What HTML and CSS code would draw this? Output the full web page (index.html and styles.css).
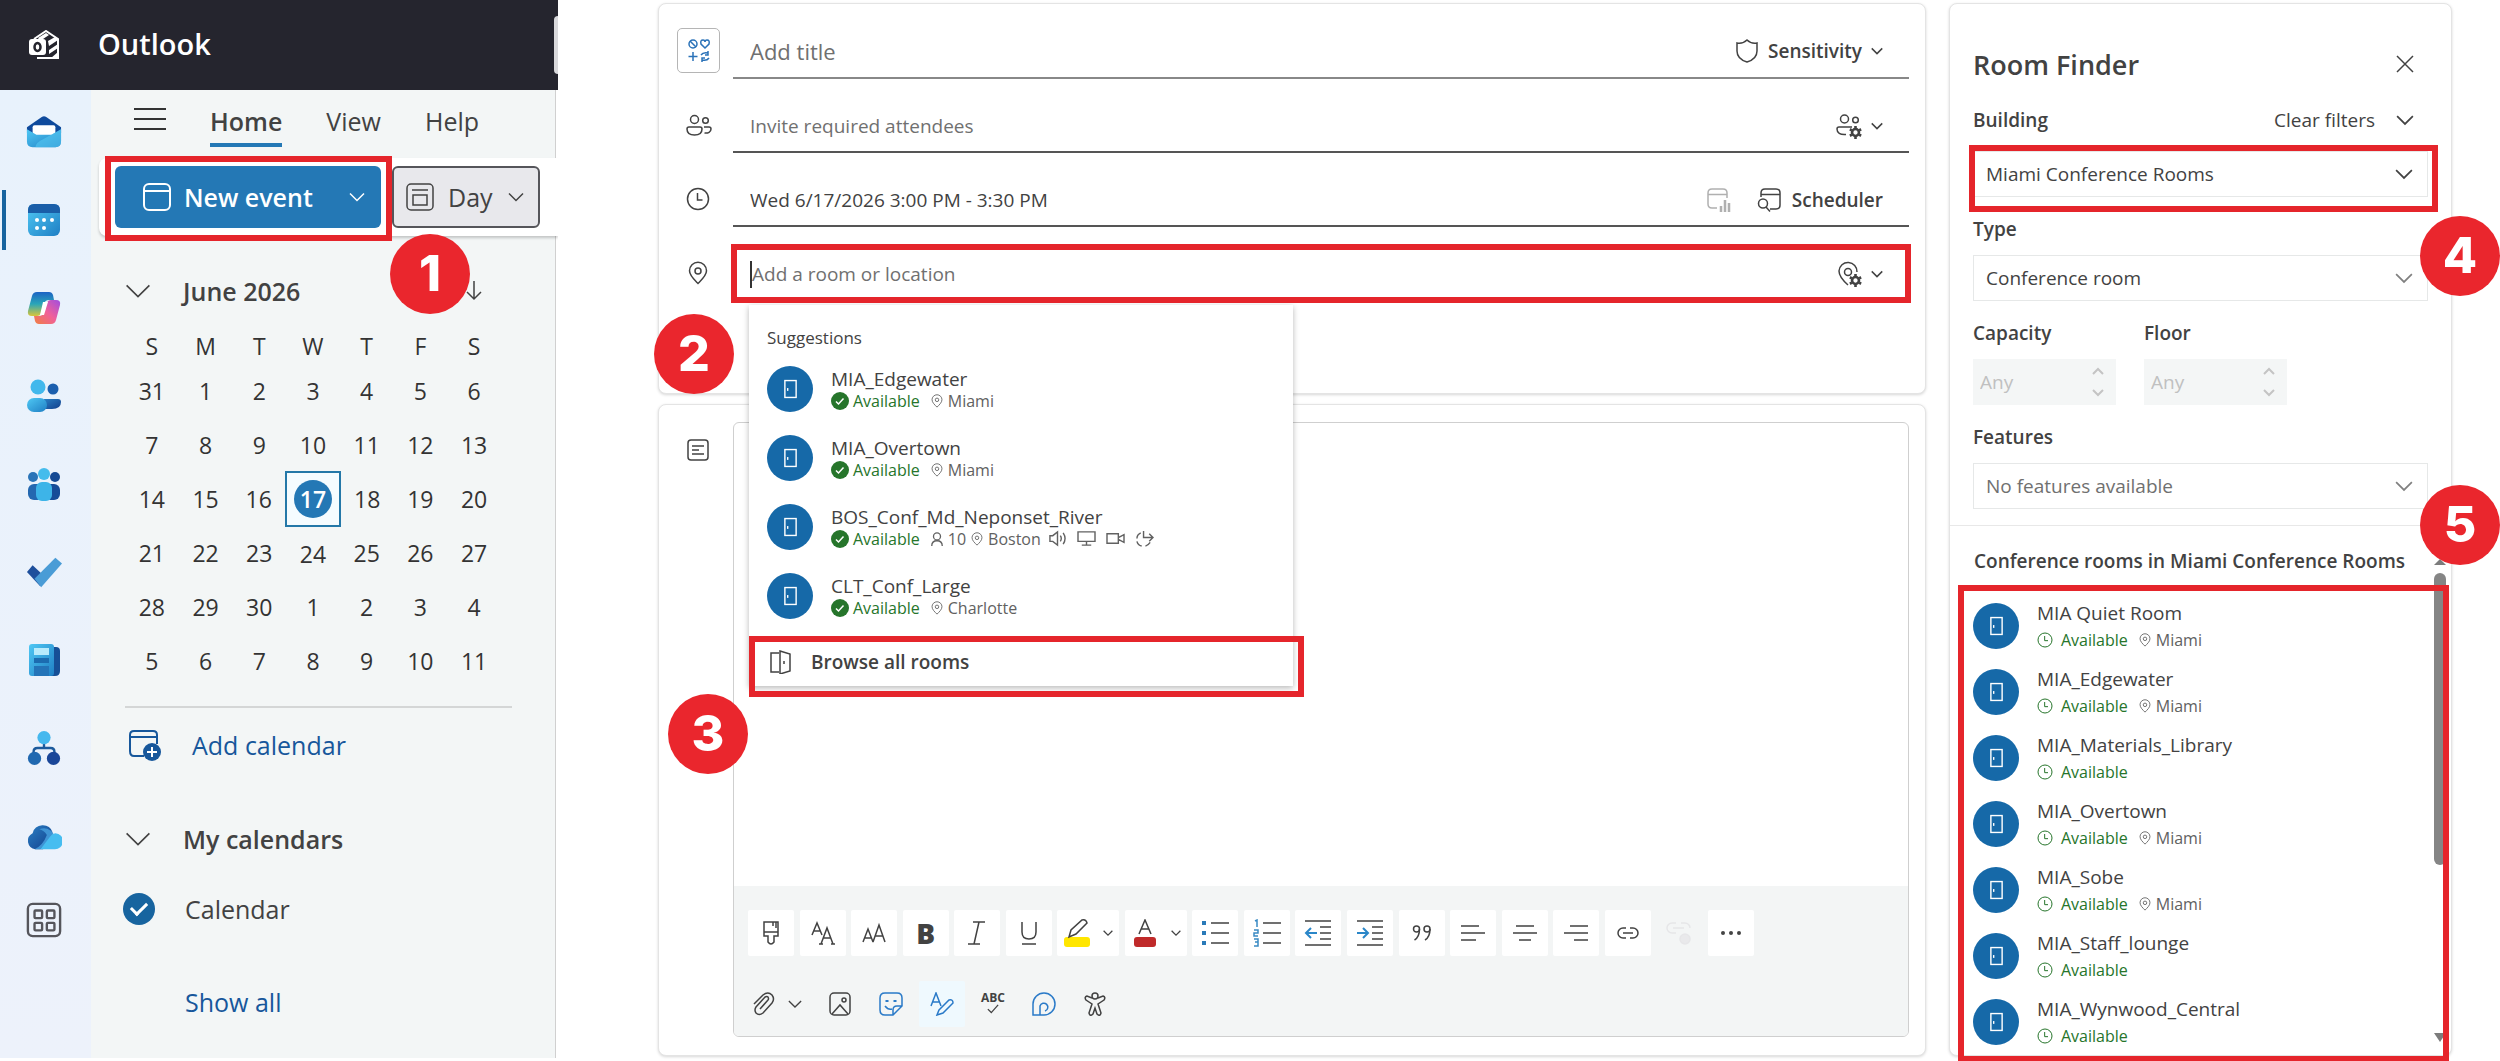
FILE: index.html
```html
<!DOCTYPE html>
<html lang="en">
<head>
    <meta charset="UTF-8">
    <meta name="viewport" content="width=device-width, initial-scale=1.0">
    <title>Outlook - Book a conference room</title>
    <link rel="stylesheet" href="styles.css">
</head>
<body>
    <!-- shared icons -->
    <svg class="sprite" aria-hidden="true">
        <defs>
            <linearGradient id="sky" x1="0" y1="0" x2="1" y2="1"><stop offset="0" stop-color="#4fc8f4"/><stop offset="1" stop-color="#1f7fc4"/></linearGradient>
            <linearGradient id="navy" x1="0" y1="0" x2="1" y2="1"><stop offset="0" stop-color="#2a7fc4"/><stop offset="1" stop-color="#123f8c"/></linearGradient>
            <linearGradient id="cool" x1="0" y1="0" x2="0" y2="1"><stop offset="0" stop-color="#1c63c4"/><stop offset=".5" stop-color="#2aa6b8"/><stop offset="1" stop-color="#d8c63a"/></linearGradient>
            <linearGradient id="warm" x1="1" y1="0" x2="0" y2="1"><stop offset="0" stop-color="#a04ee0"/><stop offset=".5" stop-color="#f0609a"/><stop offset="1" stop-color="#f08040"/></linearGradient>
        </defs>
        <symbol id="chevron" viewBox="0 0 16 16"><path d="M1 4.500l7 7 7-7"/></symbol>
        <symbol id="door" viewBox="0 0 16 22"><rect x="2" y="2" width="12" height="18"/><path d="M5 10v3"/></symbol>
        <symbol id="pin" viewBox="0 0 24 24"><path d="M12 22.500C8 18.500 3.500 14.500 3.500 9.800a8.500 8.500 0 0 1 17 0c0 4.700-4.500 8.700-8.500 12.700z"/><circle cx="12" cy="10" r="3"/></symbol>
        <symbol id="clock" viewBox="0 0 24 24"><circle cx="12" cy="12" r="10.500"/><path d="M11.500 6v7h5"/></symbol>
        <symbol id="people" viewBox="0 0 26 22"><circle cx="8.500" cy="5.500" r="4"/><circle cx="19.500" cy="6.500" r="2.800"/><path d="M3 13h11q2 0 2 2c0 4-3 6-7.500 6S1 19 1 15q0-2 2-2zM18 13h5q2 0 2 2c0 3-3 4.500-6.500 4"/></symbol>
        <symbol id="ok" viewBox="0 0 18 18"><circle cx="9" cy="9" r="9" fill="#26752b" stroke="none"/><path d="M5 9.500l2.500 2.500 5-5.500" stroke="#fff"/></symbol>
        <symbol id="gear" viewBox="0 0 12 12"><circle cx="6" cy="6" r="3.200" fill="none" stroke-width="2.400"/><path d="M6 0v2M6 10v2M.8 3l1.800 1M9.400 8l1.800 1M.8 9l1.800-1M9.400 4l1.800-1" stroke-width="2.400"/></symbol>
        <symbol id="cal" viewBox="0 0 28 28"><rect x="1" y="1" width="26" height="26" rx="5"/><path d="M1 8h26"/></symbol>
    </svg>

    <div class="page">
        <!-- Outlook navigation -->
        <aside class="outlook">
            <header class="topbar">
                <svg class="logo" viewBox="0 0 32 30">
                    <path d="M5 9L17 1l12 8v19H8" fill="none" stroke="#fff" stroke-width="2"/>
                    <path d="M9 8l8-5 3 2-9 6zM19 11l7-4 3 3-9 6zM20 20l9-6v4l-9 6zM22 28l7-6v6z" fill="#fff"/>
                    <rect y="9" width="17" height="16" rx="3" fill="#fff"/>
                    <ellipse cx="8.500" cy="17" rx="3" ry="4" fill="none" stroke="#25252e" stroke-width="2.500"/>
                </svg>
                <span class="brand">Outlook</span>
                <span class="search-edge"></span>
            </header>
            <div class="body">
                <nav class="rail">
                    <a href="#" title="Mail"><svg viewBox="0 0 38 36"><path d="M1 13L17 2q2-1 4 0l16 11v6H1z" fill="#0f4a9c"/><rect x="7" y="11" width="24" height="14" rx="2" fill="#fff"/><path d="M1 15l10 6h16l10-6v13q0 6-6 6H7q-6 0-6-6z" fill="url(#sky)"/><path d="M19 25l18-10v13q0 6-6 6H10q0-5 9-9z" fill="#55c8f2" opacity=".6"/></svg></a>
                    <a href="#" title="Calendar" class="selected"><svg viewBox="0 0 36 36"><rect x="2" y="2" width="32" height="32" rx="6" fill="url(#sky)"/><path d="M8 2h20q6 0 6 6v3H2V8q0-6 6-6z" fill="#1a5ea8"/><g fill="#fff"><circle cx="11" cy="18" r="2"/><circle cx="18" cy="18" r="2"/><circle cx="26" cy="18" r="2"/><circle cx="11" cy="26" r="2"/><circle cx="18" cy="26" r="2"/></g></svg></a>
                    <a href="#" title="Copilot"><svg viewBox="0 0 36 36"><path d="M11 2h12q3 0 4 3l1 5h-5q-4 0-5 4l-3 9q-1 3-4 3H6q-5 0-4-5L6 6q1-4 5-4z" fill="url(#cool)"/><path d="M25 34H13q-3 0-4-3l-1-5h5q4 0 5-4l3-9q1-3 4-3h5q5 0 4 5l-4 15q-1 4-5 4z" fill="url(#warm)"/><path d="M17 12h5l-4 13h-4z" fill="#fff"/></svg></a>
                    <a href="#" title="People"><svg viewBox="0 0 36 36"><circle cx="27" cy="11" r="5.500" fill="#1b5fae"/><path d="M18 21h14q3 0 3 3 0 7-9 7h-8z" fill="url(#navy)"/><circle cx="12" cy="9" r="7.500" fill="#42b8ec"/><rect x="1" y="20" width="20" height="14" rx="7" fill="url(#sky)"/></svg></a>
                    <a href="#" title="Groups"><svg viewBox="0 0 36 36"><circle cx="7" cy="11" r="5" fill="#2a74b8"/><circle cx="29" cy="11" r="5" fill="#154a94"/><rect x="2" y="18" width="16" height="16" rx="6" fill="#2468b0"/><rect x="18" y="18" width="16" height="16" rx="6" fill="#164c98"/><circle cx="18" cy="8" r="6" fill="#45bcec"/><rect x="10" y="16" width="16" height="19" rx="6" fill="#3db4e8"/></svg></a>
                    <a href="#" title="To Do"><svg viewBox="0 0 38 36"><path d="M1 18l6-7 14 13-6 9z" fill="#1e4f9c"/><path d="M9 25L31 3l7 6-22 25z" fill="#4a9cd6"/></svg></a>
                    <a href="#" title="News"><svg viewBox="0 0 36 36"><path d="M24 5h6q4 0 4 4v20q0 5-5 5h-5z" fill="#164f96"/><rect x="3" y="2" width="25" height="32" rx="3" fill="url(#sky)"/><rect x="8" y="6" width="15" height="7" fill="#b8ebfc"/><rect x="8" y="16" width="15" height="5" fill="#1c6cb0"/><rect x="8" y="24" width="15" height="10" fill="#2474b8"/></svg></a>
                    <a href="#" title="Org Explorer"><svg viewBox="0 0 36 38"><path d="M18 10v9M7 28v-5q0-4 4-4h14q4 0 4 4v5" fill="none" stroke="#1c5a9c" stroke-width="2.500"/><circle cx="18" cy="8" r="7" fill="#45b8ee"/><circle cx="8" cy="30" r="7" fill="#2068b0"/><circle cx="28" cy="30" r="7" fill="#1a4698"/></svg></a>
                    <a href="#" title="OneDrive"><svg viewBox="0 0 38 36"><path d="M10 32a9 9 0 0 1-3-17 11 11 0 0 1 21-1L18 32z" fill="url(#navy)"/><path d="M14 11a11 11 0 0 1 15 5L15 32H9q9-4 13-15-3-5-8-6z" fill="#3f93d4"/><path d="M15 32l11-14q2-3 5-3a8 8 0 0 1-1 17z" fill="#46bdf0"/></svg></a>
                    <a href="#" title="Apps"><svg viewBox="0 0 38 38"><g fill="none" stroke="#55555b" stroke-width="2.500"><rect x="2" y="2" width="34" height="34" rx="5"/><rect x="9" y="9" width="8" height="8" rx="1"/><rect x="22" y="9" width="8" height="8" rx="1"/><rect x="9" y="22" width="8" height="8" rx="1"/><rect x="22" y="22" width="8" height="8" rx="1"/></g></svg></a>
                </nav>

                <div class="pane">
                    <div class="tabs">
                        <button class="menu" aria-label="Menu"><svg viewBox="0 0 32 24"><path d="M0 2h32M0 12h32M0 22h32"/></svg></button>
                        <button class="tab active">Home</button>
                        <button class="tab">View</button>
                        <button class="tab">Help</button>
                    </div>
                    <div class="ribbon">
                        <div class="new-wrap">
                            <button class="new-event">
                                <svg class="i28"><use href="#cal"/></svg>
                                <span>New event</span>
                                <svg class="chev"><use href="#chevron"/></svg>
                            </button>
                            <div class="mark mark-new"></div>
                            <div class="badge badge-1">1</div>
                        </div>
                        <button class="day">
                            <svg class="i28" viewBox="0 0 28 28"><rect x="1" y="1" width="26" height="26" rx="4"/><path d="M6 7h16M7 12h14v10H7z"/></svg>
                            <span>Day</span>
                            <svg class="chev"><use href="#chevron"/></svg>
                        </button>
                    </div>

                    <div class="month">
                        <svg class="chev-lg"><use href="#chevron"/></svg>
                        <h2>June 2026</h2>
                        <svg class="down" viewBox="0 0 18 20"><path d="M9 0v18M2 11l7 7 7-7"/></svg>
                    </div>
                    <table class="calendar">
                        <thead>
                            <tr><th>S</th><th>M</th><th>T</th><th>W</th><th>T</th><th>F</th><th>S</th></tr>
                        </thead>
                        <tbody>
                            <tr><td>31</td><td>1</td><td>2</td><td>3</td><td>4</td><td>5</td><td>6</td></tr>
                            <tr><td>7</td><td>8</td><td>9</td><td>10</td><td>11</td><td>12</td><td>13</td></tr>
                            <tr><td>14</td><td>15</td><td>16</td><td class="today"><span>17</span></td><td>18</td><td>19</td><td>20</td></tr>
                            <tr><td>21</td><td>22</td><td>23</td><td>24</td><td>25</td><td>26</td><td>27</td></tr>
                            <tr><td>28</td><td>29</td><td>30</td><td>1</td><td>2</td><td>3</td><td>4</td></tr>
                            <tr><td>5</td><td>6</td><td>7</td><td>8</td><td>9</td><td>10</td><td>11</td></tr>
                        </tbody>
                    </table>

                    <div class="links">
                        <a href="#" class="add-calendar">
                            <svg viewBox="0 0 34 32"><path d="M29 15V6q0-4-4-4H6Q2 2 2 6v16q0 5 4 5h10M2 8h27"/><circle cx="24" cy="23" r="9" fill="#17579b" stroke="none"/><path d="M24 18v10M19 23h10" stroke="#fff"/></svg>
                            Add calendar
                        </a>
                        <div class="group">
                            <svg class="chev-lg"><use href="#chevron"/></svg>
                            <h2>My calendars</h2>
                        </div>
                        <label class="check"><input type="checkbox" checked> Calendar</label>
                        <a href="#" class="show-all">Show all</a>
                    </div>
                </div>
            </div>
        </aside>

        <!-- Event form -->
        <main class="form">
            <section class="card details">
                <div class="row">
                    <button class="emoji" aria-label="Pick an icon">
                        <svg viewBox="0 0 24 24"><circle cx="6" cy="6" r="4"/><path d="M3 3l6 6M18 10l-4-4q-1-4 2-4 2 0 2 2 0-2 2-2 3 0 2 4zM6 14v9M1.500 18.500h9M14 17q2-3 7-2v-2M21 15v2h-3M22 20q-2 3-7 2v2M15 22v-2h3"/></svg>
                    </button>
                    <div class="field light">
                        <input class="title" type="text" placeholder="Add title" aria-label="Add title">
                        <button class="tool">
                            <svg class="i24" viewBox="0 0 24 24"><path d="M12 1q4 4 10 3v8q0 8-10 11Q2 20 2 12V4q6 1 10-3z"/></svg>
                            <b>Sensitivity</b>
                            <svg class="chev-sm"><use href="#chevron"/></svg>
                        </button>
                    </div>
                </div>
                <div class="row">
                    <svg class="i26"><use href="#people"/></svg>
                    <div class="field">
                        <input type="text" placeholder="Invite required attendees" aria-label="Invite required attendees">
                        <button class="tool" aria-label="Attendee options">
                            <svg class="i26" viewBox="0 0 26 26"><circle cx="8.500" cy="6" r="4"/><circle cx="19.500" cy="7" r="2.800"/><path d="M16 14H3q-2 0-2 2c0 4 3 6 9 5.500"/><use href="#gear" x="13" y="13" width="13" height="13"/></svg>
                            <svg class="chev-sm"><use href="#chevron"/></svg>
                        </button>
                    </div>
                </div>
                <div class="row">
                    <svg class="i24"><use href="#clock"/></svg>
                    <div class="field">
                        <input type="text" value="Wed 6/17/2026 3:00 PM - 3:30 PM" aria-label="Date and time">
                        <button class="tool faded" aria-label="Polls" disabled>
                            <svg class="i24" viewBox="0 0 24 24"><path d="M20 10V5q0-4-4-4H5Q1 1 1 5v11q0 4 4 4h5M1 6.500h19"/><path d="M14 24v-6M18 24V12M22 24v-9" stroke-width="2.500"/></svg>
                        </button>
                        <button class="tool wide">
                            <svg class="i24" viewBox="0 0 24 24"><path d="M4 9V5q0-4 4-4h11q4 0 4 4v12q0 4-4 4h-6M4 6.500h19"/><circle cx="6" cy="15.500" r="4.500"/><path d="M9 19l4 4.500"/></svg>
                            <b>Scheduler</b>
                        </button>
                    </div>
                </div>
                <div class="row">
                    <svg class="i24"><use href="#pin"/></svg>
                    <div class="field location">
                        <input type="text" placeholder="Add a room or location" aria-label="Add a room or location">
                        <button class="tool" aria-label="Location options">
                            <svg class="i26" viewBox="0 0 26 26"><path d="M12 24Q3 16 3 10a9 9 0 0 1 18 1"/><circle cx="12" cy="11" r="3.500"/><use href="#gear" x="13" y="13" width="13" height="13"/></svg>
                            <svg class="chev-sm"><use href="#chevron"/></svg>
                        </button>
                        <div class="dropdown">
                            <h3>Suggestions</h3>
                            <div class="room">
                                <span class="avatar"><svg><use href="#door"/></svg></span>
                                <div><p>MIA_Edgewater</p><small><svg class="i18"><use href="#ok"/></svg><em>Available</em><svg class="i14"><use href="#pin"/></svg>Miami</small></div>
                            </div>
                            <div class="room">
                                <span class="avatar"><svg><use href="#door"/></svg></span>
                                <div><p>MIA_Overtown</p><small><svg class="i18"><use href="#ok"/></svg><em>Available</em><svg class="i14"><use href="#pin"/></svg>Miami</small></div>
                            </div>
                            <div class="room">
                                <span class="avatar"><svg><use href="#door"/></svg></span>
                                <div><p>BOS_Conf_Md_Neponset_River</p>
                                    <small><svg class="i18"><use href="#ok"/></svg><em>Available</em>
                                        <svg class="i14" viewBox="0 0 14 16"><circle cx="7" cy="5" r="4"/><path d="M1 16q0-6 6-6t6 6"/></svg>10
                                        <svg class="i14"><use href="#pin"/></svg>Boston
                                        <svg class="feature" viewBox="0 0 20 18"><path d="M2 6h3l5-4v14l-5-4H2zM13 6q2 3 0 6M16 3q4 6 0 12"/></svg>
                                        <svg class="feature" viewBox="0 0 20 18"><path d="M1 2h18v10H1zM10 12v4M5 16h10"/></svg>
                                        <svg class="feature" viewBox="0 0 20 18"><path d="M1 4h12v10H1zM13 8l6-3v8l-6-3"/></svg>
                                        <svg class="feature" viewBox="0 0 20 18"><path d="M9 1v7h10M15 4l4 4-4 4M16 13q-2 3-5 4M7 17q-4-1-5-5M2 9q0-4 4-6"/></svg>
                                    </small>
                                </div>
                            </div>
                            <div class="room">
                                <span class="avatar"><svg><use href="#door"/></svg></span>
                                <div><p>CLT_Conf_Large</p><small><svg class="i18"><use href="#ok"/></svg><em>Available</em><svg class="i14"><use href="#pin"/></svg>Charlotte</small></div>
                            </div>
                            <div class="browse-wrap">
                                <button class="browse">
                                    <svg class="i24" viewBox="0 0 24 24"><path d="M10 3H2v19h8M11 1l10 3v17l-10 3zM15 11v3"/></svg>
                                    Browse all rooms
                                </button>
                                <div class="mark mark-browse"></div>
                                <div class="badge badge-3">3</div>
                            </div>
                        </div>
                        <div class="mark mark-location"></div>
                        <div class="badge badge-2">2</div>
                    </div>
                </div>
            </section>

            <section class="card message">
                <svg class="note" viewBox="0 0 22 24"><rect x="1" y="2" width="20" height="20" rx="3"/><path d="M5 8h12M5 12h7M5 16h12"/></svg>
                <div class="editor">
                    <div class="text" contenteditable="true"></div>
                    <div class="toolbar">
                        <div class="tools format">
                            <button aria-label="Format painter"><svg viewBox="0 0 24 24"><path d="M5 1h14v14h-4v6q-3 4-6 0v-6H5zM5 11h14M14 1v4M17 1v6"/></svg></button>
                            <button aria-label="Font"><svg viewBox="0 0 24 24"><path d="M1 14L6 2l5 12M3 10h6M10 23l6-16 6 16M12 17h8M20 23h4M8 23h4"/></svg></button>
                            <button aria-label="Font size"><svg viewBox="0 0 24 24"><path d="M1 21l5-13 5 13M3 17h6M11 21l6-17 6 17M13 15h8"/></svg></button>
                            <button aria-label="Bold" class="bold">B</button>
                            <button aria-label="Italic"><svg viewBox="0 0 24 24"><path d="M8 1h12M3 23h12M14 1L9 23"/></svg></button>
                            <button aria-label="Underline"><svg viewBox="0 0 24 24"><path d="M5 1v10q0 7 7 7t7-7V1M5 23h14"/></svg></button>
                            <button aria-label="Highlight" class="split"><svg class="i28" viewBox="0 0 28 28"><rect x="1" y="18" width="26" height="10" rx="3" fill="#ffe600" stroke="none"/><path d="M6 18l2-7L19 1q4-1 5 3L13 15z" fill="#fff"/></svg><svg class="chev-sm"><use href="#chevron"/></svg></button>
                            <button aria-label="Font color" class="split"><svg class="i28" viewBox="0 0 28 28"><rect x="3" y="18" width="22" height="10" rx="3" fill="#c02a2a" stroke="none"/><path d="M8 15L14 1l6 14M10 10h8"/></svg><svg class="chev-sm"><use href="#chevron"/></svg></button>
                            <button aria-label="Bullets"><svg class="i28" viewBox="0 0 28 28"><path d="M10 4h18M10 14h18M10 24h18"/><path d="M1 4h4M1 14h4M1 24h4" stroke="#2a7ab8" stroke-width="4"/></svg></button>
                            <button aria-label="Numbering"><svg class="i28" viewBox="0 0 28 28"><path d="M10 4h18M10 14h18M10 24h18"/><path d="M2 2l2-1v7M1 11h4v3H1v3h4M1 20h4v7H1M2 23h3" stroke="#3a8ac4"/></svg></button>
                            <button aria-label="Decrease indent"><svg class="i28" viewBox="0 0 28 28"><path d="M1 2h26M16 8h11M16 14h11M16 20h11M1 26h26"/><path d="M13 14H2M7 9l-5 5 5 5" stroke="#2a86c8" stroke-width="2"/></svg></button>
                            <button aria-label="Increase indent"><svg class="i28" viewBox="0 0 28 28"><path d="M1 2h26M16 8h11M16 14h11M16 20h11M1 26h26"/><path d="M1 14h11M7 9l5 5-5 5" stroke="#2a86c8" stroke-width="2"/></svg></button>
                            <button aria-label="Quote"><svg viewBox="0 0 24 24"><circle cx="6.500" cy="8" r="3"/><circle cx="17" cy="8" r="3"/><path d="M9.500 8q0 8-5 11M20 8q0 8-5 11"/></svg></button>
                            <button aria-label="Align left"><svg viewBox="0 0 24 24"><path d="M0 5h18M0 12h24M0 19h15"/></svg></button>
                            <button aria-label="Align center"><svg viewBox="0 0 24 24"><path d="M3 5h18M0 12h24M6 19h12"/></svg></button>
                            <button aria-label="Align right"><svg viewBox="0 0 24 24"><path d="M6 5h18M0 12h24M10 19h14"/></svg></button>
                            <button aria-label="Insert link"><svg viewBox="0 0 24 24"><path d="M10 7H7a5 5 0 0 0 0 10h3M14 7h3a5 5 0 0 1 0 10h-3M7 12h10"/></svg></button>
                            <button aria-label="Remove link" class="off" disabled><svg class="i28" viewBox="0 0 28 28"><path d="M11 4H7a5 5 0 0 0 0 10h4M16 4h4a5 5 0 0 1 5 5M8 9h11"/><circle cx="20" cy="20" r="5" fill="#e9e9eb"/></svg></button>
                            <button aria-label="More"><svg viewBox="0 0 24 24"><g fill="#444" stroke="none"><circle cx="4" cy="12" r="2"/><circle cx="12" cy="12" r="2"/><circle cx="20" cy="12" r="2"/></g></svg></button>
                        </div>
                        <div class="tools insert">
                            <button aria-label="Attach" class="split"><svg viewBox="0 0 24 24"><path d="M2 12l9-9q5-4 9 0 3 4 0 8l-9 10q-4 3-7 0-2-3 0-6l9-10q2-1 3 0 1 2 0 3l-8 9"/></svg><svg class="chev"><use href="#chevron"/></svg></button>
                            <button aria-label="Picture"><svg viewBox="0 0 24 24"><rect x="2" y="1" width="20" height="22" rx="4"/><circle cx="16" cy="8" r="2"/><path d="M4 22l8-9 8 9"/></svg></button>
                            <button aria-label="Sticker" class="blue"><svg viewBox="0 0 24 24"><path d="M14 23H6q-5 0-5-5V6q0-5 5-5h12q5 0 5 5v8zM14 23v-5q0-4 4-4h5M6 14q3 4 7 3"/><path d="M8 8v2M16 8v2" stroke-width="3"/></svg></button>
                            <button aria-label="Signature" class="blue on"><svg viewBox="0 0 24 24"><path d="M1 14L6 1l5 13M3 10h6M9 18L19 8q4-1 4 3L13 21l-6 2z"/></svg></button>
                            <button aria-label="Spelling" class="spell">ABC<svg class="i14" viewBox="0 0 14 14"><path d="M1 6l4 4 8-9"/></svg></button>
                            <button aria-label="Loop" class="blue"><svg viewBox="0 0 24 24"><path d="M1 23V12A11 11 0 1 1 12 23zM8 23v-9a4 4 0 1 1 5 5"/></svg></button>
                            <button aria-label="Accessibility"><svg viewBox="0 0 24 24"><circle cx="12" cy="4" r="3"/><path d="M9 6L4 4Q1 5 3 8l6 4-3 9q1 4 4 1l2-6 2 6q3 3 4-1l-3-9 6-4q2-3-1-4l-5 2"/></svg></button>
                        </div>
                    </div>
                </div>
            </section>
        </main>

        <!-- Room Finder -->
        <aside class="card finder">
            <div class="finder-head">
                <h1>Room Finder</h1>
                <button aria-label="Close"><svg class="i18" viewBox="0 0 18 18"><path d="M1 1l16 16M17 1L1 17"/></svg></button>
            </div>
            <div class="building-head">
                <label for="building">Building</label>
                <button>Clear filters <svg class="i18"><use href="#chevron"/></svg></button>
            </div>
            <div class="select building">
                <select id="building"><option>Miami Conference Rooms</option></select>
                <svg class="i18"><use href="#chevron"/></svg>
                <div class="mark mark-building"></div>
                <div class="badge badge-4">4</div>
            </div>
            <label class="name" for="type">Type</label>
            <div class="select">
                <select id="type"><option>Conference room</option></select>
                <svg class="i18"><use href="#chevron"/></svg>
            </div>
            <div class="numbers">
                <div>
                    <label class="name" for="capacity">Capacity</label>
                    <div class="spin"><input id="capacity" type="text" placeholder="Any" disabled><svg viewBox="0 0 12 30"><path d="M1 7l5-5 5 5M1 23l5 5 5-5"/></svg></div>
                </div>
                <div>
                    <label class="name" for="floor">Floor</label>
                    <div class="spin"><input id="floor" type="text" placeholder="Any" disabled><svg viewBox="0 0 12 30"><path d="M1 7l5-5 5 5M1 23l5 5 5-5"/></svg></div>
                </div>
            </div>
            <label class="name" for="features">Features</label>
            <div class="select none">
                <select id="features"><option>No features available</option></select>
                <svg class="i18"><use href="#chevron"/></svg>
            </div>
            <h2>Conference rooms in Miami Conference Rooms</h2>
            <div class="rooms">
                <div class="room">
                    <span class="avatar"><svg><use href="#door"/></svg></span>
                    <div><p>MIA Quiet Room</p><small><svg class="i16"><use href="#clock"/></svg><em>Available</em><svg class="i14"><use href="#pin"/></svg>Miami</small></div>
                </div>
                <div class="room">
                    <span class="avatar"><svg><use href="#door"/></svg></span>
                    <div><p>MIA_Edgewater</p><small><svg class="i16"><use href="#clock"/></svg><em>Available</em><svg class="i14"><use href="#pin"/></svg>Miami</small></div>
                </div>
                <div class="room">
                    <span class="avatar"><svg><use href="#door"/></svg></span>
                    <div><p>MIA_Materials_Library</p><small><svg class="i16"><use href="#clock"/></svg><em>Available</em></small></div>
                </div>
                <div class="room">
                    <span class="avatar"><svg><use href="#door"/></svg></span>
                    <div><p>MIA_Overtown</p><small><svg class="i16"><use href="#clock"/></svg><em>Available</em><svg class="i14"><use href="#pin"/></svg>Miami</small></div>
                </div>
                <div class="room">
                    <span class="avatar"><svg><use href="#door"/></svg></span>
                    <div><p>MIA_Sobe</p><small><svg class="i16"><use href="#clock"/></svg><em>Available</em><svg class="i14"><use href="#pin"/></svg>Miami</small></div>
                </div>
                <div class="room">
                    <span class="avatar"><svg><use href="#door"/></svg></span>
                    <div><p>MIA_Staff_lounge</p><small><svg class="i16"><use href="#clock"/></svg><em>Available</em></small></div>
                </div>
                <div class="room">
                    <span class="avatar"><svg><use href="#door"/></svg></span>
                    <div><p>MIA_Wynwood_Central</p><small><svg class="i16"><use href="#clock"/></svg><em>Available</em></small></div>
                </div>
                <div class="scrollbar"><i class="up"></i><i class="thumb"></i><i class="dn"></i></div>
                <div class="mark mark-rooms"></div>
                <div class="badge badge-5">5</div>
            </div>
        </aside>
    </div>
</body>
</html>
```
FILE: styles.css
```css
* {
    box-sizing: border-box;
}

body {
    margin: 0;
    background: #fff;
    color: #424242;
    font-family: "Open Sans", "Noto Sans", sans-serif;
    font-size: 19px;
}

h1, h2, h3, p {
    margin: 0;
}

button, input, select {
    font: inherit;
    color: inherit;
    background: none;
    border: none;
    padding: 0;
    margin: 0;
    outline: none;
}

button {
    cursor: pointer;
}

a {
    color: #17579b;
    text-decoration: none;
}

svg {
    display: block;
    flex: none;
    fill: none;
    stroke: currentColor;
    stroke-width: 1.5;
}

.sprite {
    position: absolute;
    width: 0;
    height: 0;
}

.i14 { width: 14px; height: 14px; }
.i16 { width: 16px; height: 16px; }
.i18 { width: 18px; height: 18px; }
.i24 { width: 24px; height: 24px; }
.i26 { width: 26px; height: 26px; }
.i28 { width: 28px; height: 28px; }
.chev-sm { width: 12px; height: 12px; stroke-width: 2; }
.chev { width: 16px; height: 16px; }
.chev-lg { width: 26px; height: 26px; stroke-width: 1; }

.page {
    display: flex;
    min-height: 100vh;
    padding-right: 48px;
}

/* red annotations */
.mark {
    position: absolute;
    border: 6px solid #e5252b;
    pointer-events: none;
}

.badge {
    position: absolute;
    width: 80px;
    height: 80px;
    border-radius: 50%;
    background: #ea262d;
    color: #fff;
    font: 800 50px/78px Inter, sans-serif;
    text-align: center;
    z-index: 5;
}

.mark-new { inset: -10px -11px -13px -10px; }
.badge-1 { left: 275px; top: 68px; }
.mark-location { inset: 17px -2px -4px -2px; }
.badge-2 { left: -79px; top: 87px; }
.mark-browse { inset: 0 -11px -11px 0; }
.badge-3 { left: -81px; top: 58px; }
.mark-building { inset: -6px -10px -15px -4px; }
.badge-4 { right: -72px; top: 65px; }
.mark-rooms { inset: -8px -21px -7px -15px; }
.badge-5 { right: -72px; top: -108px; }

/* left side */
.outlook {
    width: 558px;
    flex: none;
    display: flex;
    flex-direction: column;
    margin-bottom: 3px;
    overflow: hidden;
}

.topbar {
    height: 90px;
    background: #25252e;
    display: flex;
    align-items: center;
    padding-left: 29px;
    overflow: hidden;
}

.logo {
    width: 32px;
    height: 30px;
    stroke: none;
}

.brand {
    color: #fff;
    font-size: 29px;
    font-weight: 600;
    line-height: 88px;
    margin: 0 0 2px 37px;
}

.search-edge {
    width: 4px;
    height: 58px;
    margin-left: auto;
    background: #d9d9dc;
    border-radius: 6px 0 0 6px;
}

.body {
    flex: 1;
    display: flex;
}

.rail {
    width: 91px;
    flex: none;
    padding-top: 20px;
    background: linear-gradient(#e8f2fc, #edf2fb);
    display: flex;
    flex-direction: column;
    align-items: center;
    gap: 44px;
}

.rail a {
    width: 100%;
    height: 44px;
    padding-right: 3px;
    position: relative;
    display: flex;
    align-items: center;
    justify-content: center;
}

.rail a:last-child {
    margin-top: -4px;
}

.rail svg {
    width: 36px;
    height: 36px;
    stroke: none;
}

.rail .selected::before {
    content: "";
    position: absolute;
    left: 2px;
    top: -8px;
    width: 4px;
    height: 60px;
    background: #17649f;
}

.pane {
    width: 465px;
    background: #f3f6f6;
    border-right: 1px solid #d0d0d0;
}

.tabs {
    display: flex;
    gap: 44px;
    height: 57px;
    padding-left: 43px;
    font-size: 25px;
}

.menu svg {
    width: 32px;
    height: 24px;
    stroke: #333;
    stroke-width: 2;
}

.tab {
    padding-top: 8px;
    border-bottom: 4px solid transparent;
}

.tab.active {
    font-weight: 600;
    border-bottom-color: #2478b5;
}

.ribbon {
    display: flex;
    align-items: center;
    gap: 11px;
    width: 459px;
    height: 78px;
    margin: 11px 0 19px 8px;
    padding-left: 16px;
    background: #fff;
    border-radius: 8px 0 0 8px;
    box-shadow: 0 2px 3px rgba(0, 0, 0, 0.2);
    font-size: 25px;
}

.new-wrap {
    position: relative;
}

.new-event, .day {
    display: flex;
    align-items: center;
    height: 62px;
    border-radius: 6px;
}

.new-event {
    width: 266px;
    padding: 0 16px 0 28px;
    background: #2478b5;
    color: #fff;
    font-weight: 600;
    gap: 13px;
}

.new-event .i28 {
    stroke-width: 2;
}

.new-event .chev {
    margin-left: auto;
}

.day {
    width: 148px;
    padding: 0 14px 0 12px;
    border: 2px solid #55555a;
    background: #e8e8ec;
    gap: 14px;
}

.day .chev {
    margin-left: auto;
}

.month {
    display: flex;
    align-items: center;
    height: 72px;
    padding: 0 72px 0 34px;
}

.month h2, .group h2 {
    font-size: 25px;
    font-weight: 600;
    margin-left: 32px;
}

.month .down {
    width: 18px;
    height: 20px;
    margin-left: auto;
}

.calendar {
    width: 376px;
    margin-left: 34px;
    border-collapse: collapse;
    table-layout: fixed;
    text-align: center;
    font-size: 23px;
    color: #333;
}

.calendar th {
    height: 37px;
    padding: 0;
    font-weight: 400;
}

.calendar td {
    height: 54px;
    padding: 0;
}

.calendar .today {
    border: 2px solid #2478a8;
    background: #f5fcff;
}

.today span {
    display: block;
    width: 38px;
    height: 38px;
    margin: 0 auto;
    border-radius: 50%;
    background: #2478b5;
    color: #fff;
    font-weight: 600;
    line-height: 38px;
}

.links {
    width: 387px;
    margin: 18px 0 0 34px;
    border-top: 2px solid #d4d6d6;
    font-size: 25px;
}

.links > * {
    display: flex;
    align-items: center;
    height: 70px;
}

.links .add-calendar {
    height: 74px;
    gap: 30px;
    padding-left: 3px;
}

.add-calendar svg {
    width: 34px;
    height: 32px;
    stroke-width: 2;
}

.group {
    margin-top: 22px;
}

.check input {
    appearance: none;
    width: 32px;
    height: 32px;
    margin: 0 30px 0 -2px;
    border-radius: 50%;
    background: #17649f;
    display: flex;
    align-items: center;
    justify-content: center;
}

.check input::after {
    content: "";
    width: 7px;
    height: 13px;
    margin-bottom: 4px;
    border: solid #fff;
    border-width: 0 3px 3px 0;
    transform: rotate(45deg);
}

.links .show-all {
    margin-top: 23px;
    padding-left: 60px;
}

/* event form */
.form {
    flex: 1;
    display: flex;
    flex-direction: column;
    gap: 10px;
    margin-left: 100px;
    padding: 3px 0 5px;
}

.card {
    background: #fff;
    border: 1px solid #e4e4e4;
    border-radius: 8px;
    box-shadow: 0 1px 3px rgba(0, 0, 0, 0.16);
}

.details {
    padding: 1px 16px 92px 18px;
}

.row {
    display: flex;
    align-items: center;
    height: 74px;
}

.row > svg {
    margin: 18px 0 0 9px;
}

.emoji {
    width: 43px;
    height: 45px;
    margin-top: 16px;
    border: 1px solid #b5b5b5;
    border-radius: 5px;
    color: #2a72b8;
}

.emoji svg {
    width: 24px;
    height: 24px;
    margin: auto;
}

.field {
    position: relative;
    display: flex;
    align-items: center;
    width: calc(100% - 56px);
    height: 74px;
    padding: 22px 26px 0 17px;
    border-bottom: 2px solid #555;
    margin-left: auto;
}

.field.light {
    padding-top: 20px;
    border-bottom-color: #888;
}

.field.location {
    border-bottom-color: transparent;
    z-index: 2;
}

.field input {
    flex: 1;
    height: 27px;
}

.field .title {
    font-size: 22px;
}

.location input {
    border-left: 2px solid #333;
}

::placeholder {
    color: #707070;
    opacity: 1;
}

.tool {
    display: flex;
    align-items: center;
    gap: 9px;
}

.tool b {
    font-weight: 600;
    font-size: 19px;
}

.tool.wide {
    margin-left: 26px;
    gap: 11px;
}

.tool.faded {
    color: #b0b0b0;
}

.dropdown {
    position: absolute;
    top: 78px;
    left: 16px;
    width: 544px;
    background: #fff;
    box-shadow: 0 2px 6px rgba(0, 0, 0, 0.28);
}

.dropdown h3 {
    height: 49px;
    padding: 21px 18px 0;
    font-size: 17px;
    font-weight: 400;
}

.room {
    display: flex;
    align-items: center;
    gap: 18px;
}

.dropdown .room {
    height: 69px;
    padding-left: 18px;
}

.avatar {
    width: 46px;
    height: 46px;
    border-radius: 50%;
    background: #1669a8;
    color: #fff;
    display: flex;
    align-items: center;
    justify-content: center;
}

.avatar svg {
    width: 15px;
    height: 22px;
}

.room p {
    font-size: 19px;
    line-height: 24px;
}

.room small {
    display: flex;
    align-items: center;
    gap: 4px;
    font-size: 16px;
    line-height: 20px;
    color: #616161;
}

.room em {
    font-style: normal;
    color: #26752b;
    margin-right: 6px;
}

.room .feature {
    width: 19px;
    height: 17px;
    margin: 0 3px;
}

.browse-wrap {
    position: relative;
    margin-top: 6px;
}

.browse {
    display: flex;
    align-items: center;
    gap: 18px;
    width: 100%;
    height: 50px;
    padding-left: 20px;
    border-top: 1px solid #ddd;
    font-weight: 600;
}

.message {
    flex: 1;
    display: flex;
    padding: 17px 16px 18px 18px;
}

.note {
    width: 22px;
    height: 24px;
    margin: 16px 24px 0 10px;
}

.editor {
    flex: 1;
    display: flex;
    flex-direction: column;
    border: 1px solid #cfcfcf;
    border-radius: 6px;
    overflow: hidden;
}

.text {
    flex: 1;
    outline: none;
}

.toolbar {
    height: 150px;
    padding: 24px 14px 8px;
    background: #f3f5f5;
}

.tools {
    display: flex;
}

.tools button {
    width: 46px;
    height: 46px;
    border-radius: 2px;
    display: flex;
    align-items: center;
    justify-content: center;
}

.tools svg {
    width: 24px;
    height: 24px;
}

.tools .i28 {
    width: 28px;
    height: 28px;
}

.tools .split {
    width: 62px;
    gap: 12px;
}

.tools .chev-sm {
    width: 10px;
    height: 10px;
}

.tools .chev {
    width: 14px;
    height: 14px;
}

.tools .bold {
    font-size: 28px;
    font-weight: 800;
}

.format {
    max-width: 1006px;
    justify-content: space-between;
}

.format button {
    background: #fff;
}

.format .off {
    background: none;
    color: #e6e6e8;
}

.insert {
    gap: 5px;
    margin-top: 25px;
}

.insert .split {
    width: 64px;
    padding-right: 6px;
}

.insert .blue {
    color: #2a7ac8;
}

.insert .on {
    background: #eff9fe;
}

.insert .spell {
    flex-direction: column;
    font-size: 12px;
    font-weight: 700;
    line-height: 12px;
}

.spell .i14 {
    width: 14px;
    height: 12px;
}

/* room finder */
.finder {
    width: 503px;
    flex: none;
    margin: 3px 0 5px 23px;
    padding: 29px 23px 0;
}

.finder label {
    font-weight: 600;
}

.finder-head, .building-head {
    display: flex;
    align-items: center;
    justify-content: space-between;
    height: 62px;
    padding-right: 14px;
}

.finder-head h1 {
    font-size: 27px;
    font-weight: 600;
}

.building-head {
    height: 50px;
    margin-bottom: 6px;
}

.building-head button {
    display: flex;
    align-items: center;
    gap: 21px;
}

.name {
    display: block;
    height: 52px;
    margin-top: 6px;
    line-height: 52px;
}

.select {
    position: relative;
    display: flex;
    align-items: center;
}

.select select {
    appearance: none;
    width: 100%;
    height: 46px;
    padding: 0 40px 0 12px;
    border: 1px solid #e6e8e8;
}

.select svg {
    position: absolute;
    right: 15px;
    color: #808080;
}

.building svg {
    color: #424242;
}

.select.none {
    color: #707070;
}

.numbers {
    display: flex;
    gap: 28px;
}

.spin {
    display: flex;
    align-items: center;
    width: 143px;
    height: 46px;
    padding: 0 12px 0 7px;
    background: #f4f6f6;
    color: #c4c4c4;
}

.spin input {
    flex: 1;
    width: 60px;
}

.spin input::placeholder {
    color: #c0c0c0;
}

.spin svg {
    width: 12px;
    height: 30px;
    stroke-width: 2;
}

.finder h2 {
    margin: 16px -23px 0;
    padding: 4px 24px 0;
    border-top: 1px solid #e8e8e8;
    font-size: 19px;
    font-weight: 600;
    line-height: 63px;
    white-space: nowrap;
}

.rooms {
    position: relative;
}

.rooms .room {
    height: 66px;
}

.rooms .room p {
    line-height: 28px;
}

.rooms .room small {
    line-height: 26px;
}

.rooms .room em {
    margin-left: 4px;
}

.rooms .i16 {
    color: #26752b;
}

.scrollbar {
    position: absolute;
    top: -34px;
    right: -18px;
    bottom: 13px;
    width: 12px;
    display: flex;
    flex-direction: column;
}

.scrollbar .up, .scrollbar .dn {
    border: 6px solid transparent;
}

.scrollbar .up {
    border-top: none;
    border-bottom-color: #7c7c7c;
}

.scrollbar .dn {
    border-bottom: none;
    border-top: 9px solid #7c7c7c;
    margin-top: auto;
}

.scrollbar .thumb {
    height: 292px;
    margin-top: 8px;
    border-radius: 6px;
    background: #858585;
}
```
